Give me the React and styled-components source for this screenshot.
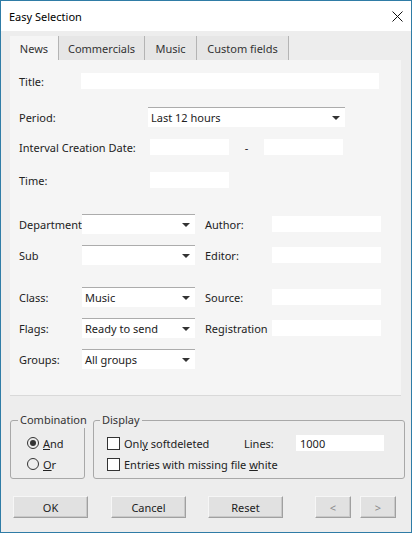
import React from 'react';
import styled, { createGlobalStyle } from 'styled-components';

const Global = createGlobalStyle`
    html, body
    {
        margin: 0;
        padding: 0;
        background: #fff;
    }
    body
    {
        font-family: "Segoe UI", "Noto Sans", "Open Sans", sans-serif;
        font-size: 11px;
        color: #222;
    }
    *
    {
        box-sizing: border-box;
    }
`;

const Window = styled.div`
    width: 412px;
    height: 533px;
    border: 1px solid #2f7ca6;
    background: #ededed;
    display: flex;
    flex-direction: column;
`;

const TitleBar = styled.div`
    height: 30px;
    background: #fff;
    display: flex;
    align-items: center;
    justify-content: space-between;
    padding: 0 8px 0 8px;
    font-size: 11px;
    color: #000;
`;

const Body = styled.div`
    padding: 5px 6px 0 9px;
    display: flex;
    flex-direction: column;
`;

const TabStrip = styled.div`
    display: flex;
    height: 24px;
    align-items: flex-end;
`;

const Tab = styled.div`
    width: ${p => p.w}px;
    height: 24px;
    display: flex;
    align-items: center;
    justify-content: center;
    background: ${p => p.active ? '#f5f5f5' : '#e6e6e6'};
    border-right: 1px solid #b4b4b4;
    color: #333;
    padding-top: ${p => p.active ? 0 : 1}px;
`;

const Panel = styled.div`
    width: 391px;
    height: 336px;
    background: #f5f5f5;
    border-bottom: 1px solid #d9d9d9;
    padding: 13px 0 0 9px;
    display: flex;
    flex-direction: column;
`;

const Row = styled.div`
    display: flex;
    align-items: center;
    height: ${p => p.h || 20}px;
    margin-top: ${p => p.top || 0}px;
`;

const Label = styled.div`
    width: ${p => p.w}px;
    margin-left: ${p => p.ml || 0}px;
    white-space: nowrap;
    flex-shrink: 0;
`;

const Input = styled.div`
    width: ${p => p.w}px;
    height: 16px;
    background: #fff;
    flex-shrink: 0;
    display: flex;
    align-items: center;
    padding-left: 4px;
`;

const Select = styled.div`
    width: ${p => p.w}px;
    height: 20px;
    background: #fff;
    border-top: 1px solid #acacac;
    display: flex;
    align-items: center;
    justify-content: space-between;
    padding: 0 5px 0 3px;
    flex-shrink: 0;
`;

const Arrow = styled.span`
    width: 0;
    height: 0;
    border-left: 4px solid transparent;
    border-right: 4px solid transparent;
    border-top: 4px solid #333;
`;

const Dash = styled.div`
    width: 35px;
    text-align: center;
`;

const Options = styled.div`
    display: flex;
    margin-top: 16px;
    gap: 8px;
`;

const Group = styled.fieldset`
    width: ${p => p.w}px;
    height: 67px;
    margin: 0;
    padding: 0;
    border: 1px solid #a8a8a8;
    border-radius: 3px;
    min-width: 0;
    flex-shrink: 0;
`;

const Legend = styled.legend`
    margin-left: ${p => p.ml}px;
    padding: 0 2px;
    line-height: 16px;
    color: #333;
`;

const OptionRow = styled.div`
    display: flex;
    align-items: center;
    height: 16px;
    margin-top: ${p => p.top}px;
    padding-left: ${p => p.pl}px;
`;

const Radio = styled.span`
    width: 12px;
    height: 12px;
    border: 1px solid #333;
    border-radius: 50%;
    display: flex;
    align-items: center;
    justify-content: center;
    margin-right: 4px;

    &::after
    {
        content: "";
        width: 6px;
        height: 6px;
        border-radius: 50%;
        background: ${p => p.checked ? '#333' : 'transparent'};
    }
`;

const Check = styled.span`
    width: 13px;
    height: 13px;
    border: 1px solid #333;
    background: #fff;
    margin-right: 4px;
    flex-shrink: 0;
`;

const CheckText = styled.div`
    width: ${p => p.w || 'auto'};
    white-space: nowrap;
`;

const Buttons = styled.div`
    display: flex;
    margin-top: 17px;
    padding-left: 3px;
`;

const Button = styled.div`
    width: ${p => p.w}px;
    height: 22px;
    margin-left: ${p => p.ml || 0}px;
    background: #e1e1e1;
    border-top: 1px solid #f6f6f6;
    border-left: 1px solid #f6f6f6;
    border-right: 1px solid #a0a0a0;
    border-bottom: 1px solid #a0a0a0;
    box-shadow: inset -1px -1px 0 #c9c9c9;
    display: flex;
    align-items: center;
    justify-content: center;
    color: ${p => p.muted ? '#8a8a8a' : '#222'};
`;

const CloseIcon = () => (
    <svg width="11" height="11" viewBox="0 0 11 11">
        <path d="M0.5 0.5 L10.5 10.5 M10.5 0.5 L0.5 10.5" stroke="#111" strokeWidth="1" fill="none"/>
    </svg>
);

const tabs = [
    { title: 'News', w: 49 },
    { title: 'Commercials', w: 86 },
    { title: 'Music', w: 52 },
    { title: 'Custom fields', w: 92 },
];

const pairs = [
    { label: 'Department', value: '', right: 'Author:', top: 26 },
    { label: 'Sub', value: '', right: 'Editor:', top: 11 },
    { label: 'Class:', value: 'Music', right: 'Source:', top: 22 },
    { label: 'Flags:', value: 'Ready to send', right: 'Registration', top: 11 },
    { label: 'Groups:', value: 'All groups', top: 11 },
];

const App = () =>
{
    return (
        <>
            <Global/>
            <Window>
                <TitleBar>
                    <span>Easy Selection</span>
                    <CloseIcon/>
                </TitleBar>
                <Body>
                    <TabStrip>
                        {tabs.map((t, i) => (
                            <Tab key={t.title} w={t.w} active={i === 0}>{t.title}</Tab>
                        ))}
                    </TabStrip>
                    <Panel>
                        <Row h={16}>
                            <Label w={62}>Title:</Label>
                            <Input w={298}/>
                        </Row>
                        <Row top={18}>
                            <Label w={129}>Period:</Label>
                            <Select w={197}><span>Last 12 hours</span><Arrow/></Select>
                        </Row>
                        <Row h={16} top={12}>
                            <Label w={131}>Interval Creation Date:</Label>
                            <Input w={79}/>
                            <Dash>-</Dash>
                            <Input w={79}/>
                        </Row>
                        <Row h={16} top={17}>
                            <Label w={131}>Time:</Label>
                            <Input w={79}/>
                        </Row>
                        {pairs.map(p => (
                            <Row key={p.label} top={p.top}>
                                <Label w={63}>{p.label}</Label>
                                <Select w={113}><span>{p.value}</span><Arrow/></Select>
                                {p.right && (
                                    <>
                                        <Label w={67} ml={10}>{p.right}</Label>
                                        <Input w={109}/>
                                    </>
                                )}
                            </Row>
                        ))}
                    </Panel>
                    <Options>
                        <Group w={75}>
                            <Legend ml={7}>Combination</Legend>
                            <OptionRow top={7} pl={16}>
                                <Radio checked/>
                                <span><u>A</u>nd</span>
                            </OptionRow>
                            <OptionRow top={5} pl={16}>
                                <Radio/>
                                <span><u>O</u>r</span>
                            </OptionRow>
                        </Group>
                        <Group w={312}>
                            <Legend ml={6}>Display</Legend>
                            <OptionRow top={7} pl={13}>
                                <Check/>
                                <CheckText w="120px">Onl<u>y</u> softdeleted</CheckText>
                                <Label w={52}>Lines:</Label>
                                <Input w={88}>1000</Input>
                            </OptionRow>
                            <OptionRow top={5} pl={13}>
                                <Check/>
                                <CheckText>Entries with missing file <u>w</u>hite</CheckText>
                            </OptionRow>
                        </Group>
                    </Options>
                    <Buttons>
                        <Button w={75}>OK</Button>
                        <Button w={75} ml={23}>Cancel</Button>
                        <Button w={75} ml={22}>Reset</Button>
                        <Button w={36} ml={32} muted>&lt;</Button>
                        <Button w={36} ml={9} muted>&gt;</Button>
                    </Buttons>
                </Body>
            </Window>
        </>
    );
}

export default App
